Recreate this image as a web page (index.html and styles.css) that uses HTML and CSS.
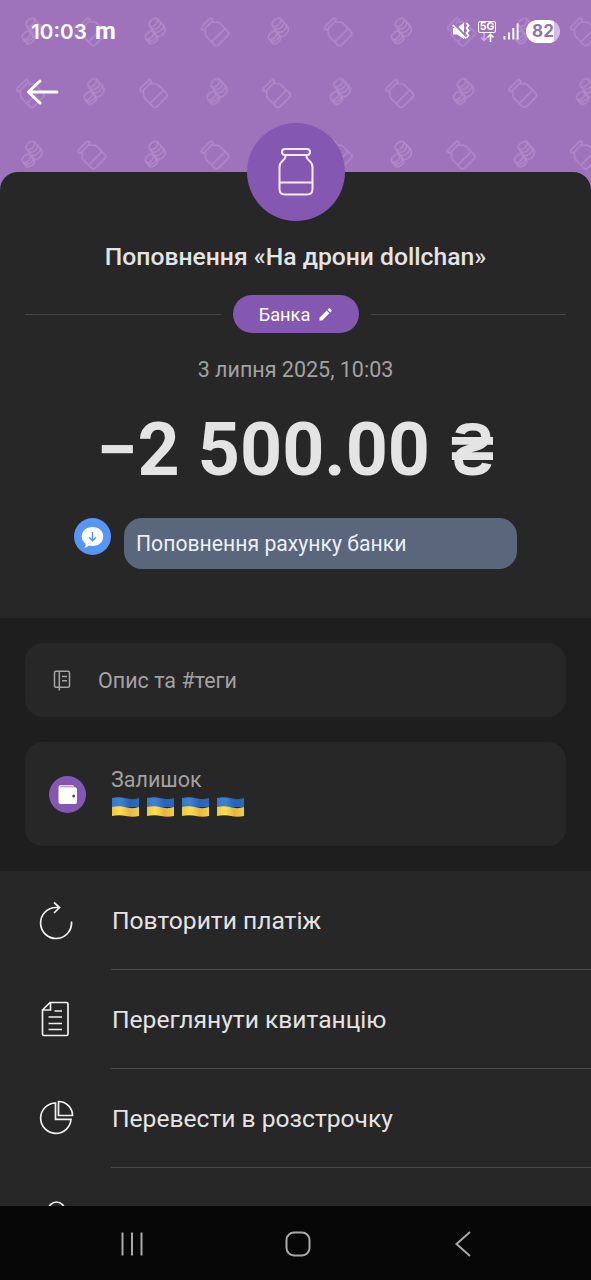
FILE: index.html
```
<!DOCTYPE html>
<html lang="uk">
<head>
<meta charset="utf-8">
<title>Поповнення</title>
<link rel="stylesheet" href="styles.css">
</head>
<body>
<div class="screen">
  <header class="header">
    <svg class="pattern" width="591" height="190" viewBox="0 0 591 190">
      <defs>
        <g id="jar">
          <rect x="-7.500" y="-13.200" width="15" height="3.600" rx="1.800"/>
          <path d="M-5.500-9.600C-5-7-9.500-6.500-9.500-3V8.500Q-9.500 11.500-6.500 11.500H6.500Q9.500 11.500 9.500 8.500V-3C9.500-6.500 5-7 5.500-9.600M-9.500 4.500H9.500"/>
        </g>
        <g id="coins">
          <path d="M-5.500-5C-8-8-1.500-14.500 2-12.500L9-5Q10.500-3.500 10 0Q7 6 2 5.500Z"/>
          <path d="M-5.500-5C-2-2.500 4.500-9 2-12.500M-3-2.500C1 0 7-6 5-9.500M-.5 1C3.500 2.500 9.500-2.500 8-6.500"/>
          <path d="M-9 8C-12 4.500-5.500-1.500-2 .5L2 5.500C4 9-2.500 14.500-6 12Z"/>
          <path d="M-9 8C-6 10 0 4.500-2 .5M-7 10C-3 11 2 7 1 4"/>
        </g>
        <pattern id="bg" width="123.100" height="123.100" patternUnits="userSpaceOnUse">
          <g class="motif">
            <use href="#coins" x="32" y="31"/>
            <use href="#jar" transform="translate(92 32) rotate(-45)"/>
            <use href="#jar" transform="translate(30.500 93.700) rotate(-45)"/>
            <use href="#coins" x="94" y="91.500"/>
          </g>
        </pattern>
      </defs>
      <rect width="591" height="190" fill="url(#bg)"/>
    </svg>
    <div class="status">
      <div class="clock">10:03 <span class="carrier">m</span></div>
      <div class="indicators">
        <svg width="19" height="20" viewBox="0 0 19 20">
          <path d="M1 7H5L12 1.500V18L5 13.500H1Z" fill="#fff"/>
          <path d="M14.500 2L16.500 4.500L14.500 7L16.500 9.500L14.500 12L16.500 14.500L14.500 17" fill="none" stroke="#fff" stroke-width="1.800"/>
          <path d="M2 2.500L13 14.500" stroke="#9e73bb" stroke-width="2"/>
          <path d="M.8 4L14 17.500" stroke="#fff" stroke-width="1.600"/>
        </svg>
        <div class="network">
          <span class="gen">5G</span>
          <svg width="18" height="9" viewBox="0 0 18 9" fill="none" stroke-width="1.600">
            <path d="M6 0V7M3 4.500L6 7.500L9 4.500" stroke="#cba9ef"/>
            <path d="M12.500 9V1.500M9.500 4.500L12.500 1.500L15.500 4.500" stroke="#fff"/>
          </svg>
        </div>
        <svg width="16" height="17" viewBox="0 0 16 17" stroke="#fff" stroke-width="1.900">
          <path d="M1.500 13V16.500M6 9.500V16.500M10.300 5V16.500M14.600 .5V16.500"/>
        </svg>
        <div class="battery">82</div>
      </div>
    </div>
    <svg class="back" width="34" height="28" viewBox="0 0 34 28" fill="none" stroke="#fff" stroke-width="3" stroke-linecap="round" stroke-linejoin="round">
      <path d="M31 14H2.500M14 3L2.500 14L14 25"/>
    </svg>
  </header>

  <main class="sheet">
    <section class="summary">
      <div class="avatar">
        <svg width="36" height="50" viewBox="0 0 36 50" fill="none" stroke="#fbeaff" stroke-width="2">
          <rect x="4" y="2" width="28" height="6" rx="3"/>
          <path d="M7.500 8C8.500 14 1.500 13 1.500 20V42Q1.500 47.500 7 47.500H29Q34.500 47.500 34.500 42V20C34.500 13 27.500 14 28.500 8M1.500 35.500H34.500"/>
        </svg>
      </div>
      <h1 class="title">Поповнення «На дрони dollchan»</h1>
      <div class="category">
        <span class="rule"></span>
        <div class="pill">
          <span>Банка</span>
          <svg width="13" height="13" viewBox="0 0 14 14" fill="#fff"><path d="M.5 10.600L8.300 2.800L11.200 5.700L3.400 13.500H.5ZM9.200 1.900L10.600 .6Q11.200 .1 11.800 .6L13.400 2.200Q13.900 2.800 13.400 3.400L12.100 4.800Z"/></svg>
        </div>
        <span class="rule"></span>
      </div>
      <div class="date">3 липня 2025, 10:03</div>
      <div class="amount">−2 500.00 <span class="currency">₴</span></div>
      <div class="message">
        <svg width="37" height="37" viewBox="0 0 37 37">
          <circle cx="18.500" cy="18.500" r="18.500" fill="#5896f5"/>
          <path d="M18.500 9C25 9 29.200 13 29.200 18.500S25 28 18.500 28Q16.500 28 15 27.600Q13 29.500 10.300 29.700Q12 28 11.700 25.800C9 24 7.800 21.500 7.800 18.500C7.800 13 12 9 18.500 9Z" fill="#fff"/>
          <path d="M18.500 14V22.500M15 19.200L18.500 22.700L22 19.200" fill="none" stroke="#5896f5" stroke-width="1.500"/>
        </svg>
        <div class="bubble">Поповнення рахунку банки</div>
      </div>
    </section>

    <section class="details">
      <div class="card note">
        <svg width="18" height="21" viewBox="0 0 18 21" fill="none" stroke="#a5a5a5" stroke-width="1.500">
          <rect x="1.500" y="1.200" width="15" height="16" rx="1.500"/>
          <path d="M6.300 1V20.500M9 6.500H14M9 10.800H14"/>
        </svg>
        <span>Опис та #теги</span>
      </div>
      <div class="card balance">
        <svg width="37" height="37" viewBox="0 0 37 37">
          <circle cx="18.500" cy="18.500" r="18.500" fill="#8457b1"/>
          <path d="M11.500 9.200H23.500Q25.200 9.200 25.200 10.500H12Q11 10.500 11 11.300H26Q28 11.300 28 13.300V26Q28 28 26 28H11.500Q9.500 28 9.500 26V11.200Q9.500 9.200 11.500 9.200Z" fill="#fff"/>
          <circle cx="24.700" cy="20" r="1.500" fill="#64438a"/>
        </svg>
        <div class="balance-text">
          <div class="label">Залишок</div>
          <div class="flags">
            <svg class="flag-defs" width="0" height="0">
              <defs>
                <linearGradient id="blue"><stop offset="0" stop-color="#3678c8"/><stop offset=".3" stop-color="#4082ce"/><stop offset=".65" stop-color="#2863ba"/><stop offset="1" stop-color="#2d68bb"/></linearGradient>
                <linearGradient id="gold"><stop offset="0" stop-color="#edc544"/><stop offset=".3" stop-color="#ffdc55"/><stop offset=".65" stop-color="#e5b63e"/><stop offset="1" stop-color="#f5cf4b"/></linearGradient>
                <g id="flag">
                  <path d="M0 1Q7-.5 14 1.300T27 1V10H0Z" fill="url(#blue)"/>
                  <path d="M0 10Q7 8.500 14 10.300T27 10V19Q20.500 20.500 14 19T0 19Z" fill="url(#gold)"/>
                </g>
              </defs>
            </svg>
            <svg width="27" height="20" viewBox="0 0 27 20"><use href="#flag"/></svg>
            <svg width="27" height="20" viewBox="0 0 27 20"><use href="#flag"/></svg>
            <svg width="27" height="20" viewBox="0 0 27 20"><use href="#flag"/></svg>
            <svg width="27" height="20" viewBox="0 0 27 20"><use href="#flag"/></svg>
          </div>
        </div>
      </div>
    </section>

    <section class="actions">
      <div class="action">
        <svg class="icon" viewBox="0 0 40 40"><path d="M35.500 20.500A15.500 15.500 0 1 1 20 6.500H22.500M18 1.500L23.500 6.500L18 12"/></svg>
        <div class="action-label">Повторити платіж</div>
      </div>
      <div class="action">
        <svg class="icon" viewBox="0 0 40 40"><path d="M14 2.500H30.500Q32 2.500 32 4V34Q32 35.500 30.500 35.500H8Q6.500 35.500 6.500 34V10ZM14.500 2.500V10H6.500M18.500 11H26M12.500 17H26M12.500 23.500H26M12.500 29.500H26"/></svg>
        <div class="action-label">Переглянути квитанцію</div>
      </div>
      <div class="action">
        <svg class="icon" viewBox="0 0 40 40"><path d="M19.500 4A15.200 15.200 0 1 0 35 20.300H19.500ZM22.500 2.500A14 14 0 0 1 36.500 16.500H22.500Z"/></svg>
        <div class="action-label">Перевести в розстрочку</div>
      </div>
      <div class="action">
        <svg class="icon" viewBox="0 0 40 40"><circle cx="20.500" cy="12" r="8"/></svg>
      </div>
    </section>
  </main>

  <nav class="navbar">
    <svg width="26" height="26" viewBox="0 0 26 26" stroke="#a9a9a9" stroke-width="2"><path d="M3.500 1.500V24.500M13 1.500V24.500M22.500 1.500V24.500"/></svg>
    <svg width="26" height="26" viewBox="0 0 26 26" fill="none" stroke="#a9a9a9" stroke-width="2"><rect x="1.500" y="1.500" width="23" height="23" rx="7.500"/></svg>
    <svg width="26" height="26" viewBox="0 0 26 26" fill="none" stroke="#a9a9a9" stroke-width="2"><path d="M20 1L6.500 13L20 25"/></svg>
  </nav>
</div>
</body>
</html>
```
FILE: styles.css
```
* { box-sizing: border-box; }
body { margin: 0; background: #272727; font-family: Roboto, sans-serif; color: #e4e4e4; }
svg { display: block; flex: none; }
.screen { width: 591px; height: 1280px; display: flex; flex-direction: column; overflow: hidden; background: #9e73bb; }
.header { position: relative; height: 172px; flex: none; }
.pattern { position: absolute; left: 0; top: 0; }
.motif { fill: none; stroke: #b28aca; stroke-width: 1.4; }
.status { position: relative; display: flex; justify-content: space-between; align-items: center; height: 62px; padding: 0 31px 0 31px; color: #fff; }
.clock { padding-top: 1px; font: 600 20.700px/26px Inter, sans-serif; white-space: pre; }
.carrier { margin-left: 3px; font: 700 24px/24px Roboto, sans-serif; }
.indicators { display: flex; align-items: center; gap: 7px; }
.network { width: 18px; display: flex; flex-direction: column; align-items: center; }
.gen { width: 18px; height: 12px; border: 1px solid #fff; border-radius: 2px; font: 700 10.500px/10px Inter, sans-serif; text-align: center; }
.battery { width: 34px; height: 23px; border-radius: 12px; background: linear-gradient(90deg, #fff 82%, #d4bce4 82%); color: #9370ae; font: 700 17px/23px Inter, sans-serif; text-align: center; }
.back { position: relative; margin: 16px 0 0 26px; }
.sheet { position: relative; height: 1034px; flex: none; display: flex; flex-direction: column; }
.summary { height: 446px; flex: none; display: flex; flex-direction: column; align-items: center; background: #272727; border-radius: 18px 18px 0 0; }
.avatar { width: 98px; height: 98px; margin-top: -49px; border-radius: 50%; background: #8457b1; display: flex; align-items: center; justify-content: center; flex: none; }
.title { margin: 21px 0 0; font-size: 24.700px; line-height: 30px; font-weight: 500; white-space: nowrap; }
.category { margin-top: 23px; width: 541px; display: flex; align-items: center; gap: 12px; }
.rule { flex: 1; height: 1px; background: #454545; }
.pill { width: 126px; height: 38px; border-radius: 19px; background: #8457b1; display: flex; align-items: center; justify-content: center; gap: 9px; color: #fff; font-size: 18.200px; }
.date { margin-top: 23px; font-size: 21.500px; line-height: 28px; color: #a2a2a2; white-space: nowrap; }
.amount { margin-top: 21px; font-size: 73.500px; line-height: 90px; font-weight: 700; white-space: nowrap; }
.currency { display: inline-block; margin-left: -3px; transform: scaleX(.88); transform-origin: right; }
.message { margin-top: 23px; width: 443px; display: flex; gap: 13px; }
.bubble { flex: 1; height: 51px; border-radius: 18px; padding-left: 12px; background: #5a667c; color: #eaf0fa; font-size: 21.200px; line-height: 51px; white-space: nowrap; }
.details { height: 253px; flex: none; padding: 25px; display: flex; flex-direction: column; gap: 25px; background: #1e1e1e; color: #a2a2a2; font-size: 21.500px; }
.card { display: flex; align-items: center; border-radius: 18px; background: #272727; }
.note { height: 74px; padding-left: 28px; gap: 27px; }
.balance { height: 104px; padding-left: 24px; gap: 25px; }
.balance-text { display: flex; flex-direction: column; gap: 3px; padding-bottom: 5px; }
.label { line-height: 28px; }
.flags { display: flex; gap: 8px; padding-left: 1px; }
.flag-defs { position: absolute; }
.actions { flex: 1; overflow: hidden; background: #272727; }
.action { height: 99px; display: flex; align-items: center; padding-left: 36px; gap: 35px; }
.icon { width: 40px; height: 40px; fill: none; stroke: #f0f0f0; stroke-width: 1.700; }
.action-label { flex: 1; height: 99px; padding-left: 1px; border-bottom: 1px solid #4a4a4a; font-size: 24.600px; line-height: 99px; white-space: nowrap; }
.navbar { height: 74px; flex: none; display: flex; align-items: center; justify-content: space-between; padding: 2px 115px 0 119px; background: #070707; }
```
